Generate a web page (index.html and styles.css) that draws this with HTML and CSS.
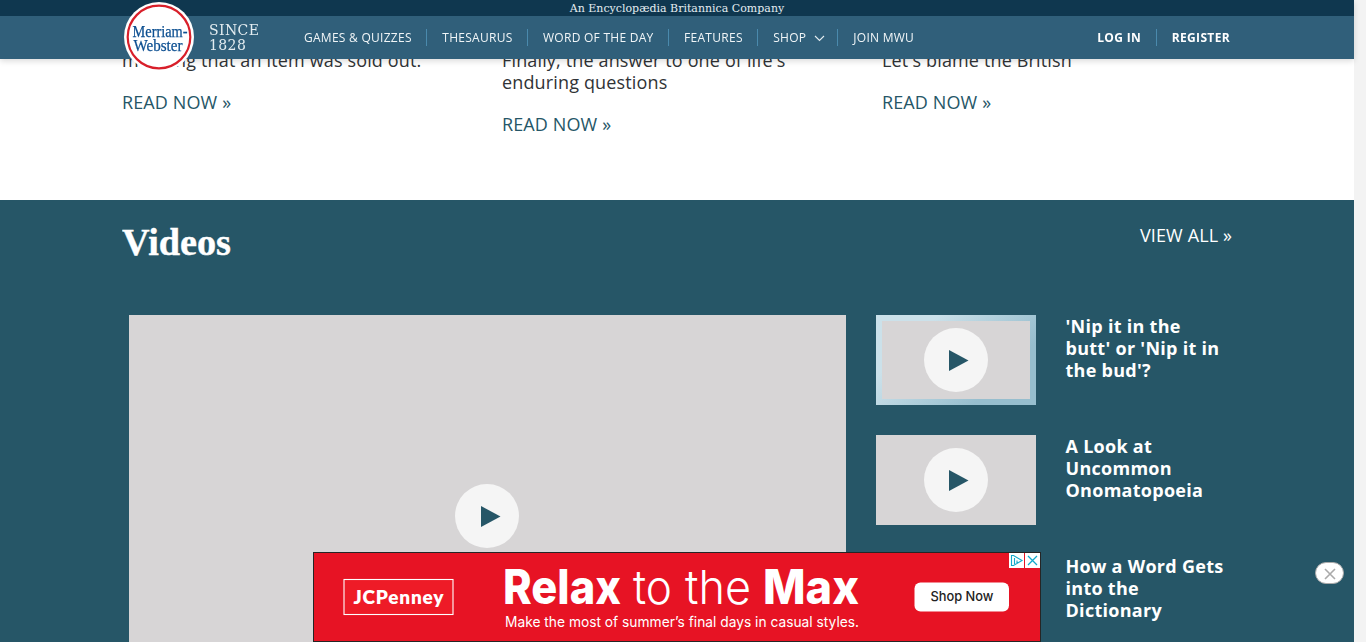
FILE: index.html
```html
<!DOCTYPE html>
<html lang="en">
<head>
<meta charset="utf-8">
<title>Merriam-Webster</title>
<link rel="stylesheet" href="styles.css">
</head>
<body>
<header class="header">
  <div class="tagline">An Encyclopædia Britannica Company</div>
  <div class="navbar">
    <svg class="logo" width="70" height="70" viewBox="0 0 70 70">
      <circle cx="35" cy="35" r="35" fill="#fff"/>
      <circle cx="35" cy="35" r="31.3" fill="#fff" stroke="#d81f2a" stroke-width="2.2"/>
      <text x="8.5" y="35" textLength="55" lengthAdjust="spacingAndGlyphs">Merriam-</text>
      <text x="9.5" y="49" textLength="49" lengthAdjust="spacingAndGlyphs">Webster</text>
    </svg>
    <div class="since">SINCE<br>1828</div>
    <nav class="nav">
      <a>GAMES &amp; QUIZZES</a><a>THESAURUS</a><a>WORD OF THE DAY</a><a>FEATURES</a>
      <a>SHOP<svg class="chevron" width="11" height="7" viewBox="0 0 11 7"><path d="M1 1l4.5 4.5L10 1" fill="none" stroke="#e4edf1" stroke-width="1.1"/></svg></a><a>JOIN MWU</a>
    </nav>
    <nav class="nav account"><a>LOG IN</a><a>REGISTER</a></nav>
  </div>
</header>
<div class="layout">
  <main class="page">
    <section class="articles">
      <article><p>meaning that an item was sold out.</p><a>READ NOW »</a></article>
      <article><p>Finally, the answer to one of life's enduring questions</p><a>READ NOW »</a></article>
      <article><p>Let's blame the British</p><a>READ NOW »</a></article>
    </section>
    <section class="videos">
      <div class="videos-head">
        <h2><svg width="114" height="46" viewBox="0 0 114 46"><text x="0" y="31" textLength="109" lengthAdjust="spacingAndGlyphs">Videos</text></svg></h2>
        <a>VIEW ALL »</a>
      </div>
      <div class="videos-body">
        <div class="player"><span class="play"><svg width="20" height="22" viewBox="0 0 20 22"><path d="M0 0L19.5 10.5 0 21z"/></svg></span></div>
        <ul class="list">
          <li><div class="thumb current"><span class="play"><svg width="20" height="22" viewBox="0 0 20 22"><path d="M0 0L19.5 10.5 0 21z"/></svg></span></div><h3>'Nip it in the butt' or 'Nip it in the bud'?</h3></li>
          <li><div class="thumb"><span class="play"><svg width="20" height="22" viewBox="0 0 20 22"><path d="M0 0L19.5 10.5 0 21z"/></svg></span></div><h3>A Look at Uncommon Onomatopoeia</h3></li>
          <li><div class="thumb"><span class="play"><svg width="20" height="22" viewBox="0 0 20 22"><path d="M0 0L19.5 10.5 0 21z"/></svg></span></div><h3>How a Word Gets into the Dictionary</h3></li>
        </ul>
      </div>
    </section>
  </main>
  <div class="scroll-track"></div>
</div>
<aside class="ad">
  <svg width="726" height="88" viewBox="0 0 726 88">
    <rect x="30" y="26.5" width="109" height="35" fill="#ee1b27" stroke="#fff" stroke-width="1.1"/>
    <text class="brand" x="39.5" y="50.5" textLength="90" lengthAdjust="spacing">JCPenney</text>
    <text class="strong" x="189" y="51" textLength="118" lengthAdjust="spacingAndGlyphs">Relax</text>
    <text class="thin" x="319" y="51" textLength="39" lengthAdjust="spacingAndGlyphs">to</text>
    <text class="thin" x="371" y="51" textLength="66" lengthAdjust="spacingAndGlyphs">the</text>
    <text class="strong" x="449" y="51" textLength="96" lengthAdjust="spacingAndGlyphs">Max</text>
    <text class="sub" x="191" y="74" textLength="354" lengthAdjust="spacingAndGlyphs">Make the most of summer’s final days in casual styles.</text>
    <rect x="600.5" y="29.5" width="94.5" height="29" rx="6" fill="#fff"/>
    <text class="cta" x="616.5" y="48" textLength="63" lengthAdjust="spacingAndGlyphs">Shop Now</text>
    <path d="M695 0h15v15h-15zM711 0h15v15h-15z" fill="#fff"/>
    <path d="M697.5 2.5v10l2 0 8.5-5-8.5-5zM700.5 5v6M703 7.5v3" fill="none" stroke="#12a9cb" stroke-width="1.1"/>
    <path d="M714 3l9 9M723 3l-9 9" fill="none" stroke="#12a9cb" stroke-width="1.3"/>
  </svg>
</aside>
<button class="close"><svg width="12" height="12" viewBox="0 0 12 12"><path d="M1 1l10 10M11 1L1 11" fill="none" stroke="#aaa" stroke-width="1.6"/></svg></button>
</body>
</html>
```
FILE: styles.css
```css
* { box-sizing: border-box; }
body { margin: 0; height: 642px; overflow: hidden; background: #fff; color: #303336; font: 18px/22px "Open Sans", sans-serif; letter-spacing: .15px; }
h2, h3, p, ul { margin: 0; padding: 0; }
.header { position: fixed; top: 0; left: 0; width: 1354px; height: 59px; z-index: 5; background: #305f7a; box-shadow: 0 2px 6px rgba(0,0,0,.15); }
.tagline { height: 16px; padding-top: 1px; background: #0f374f; color: #e4edf1; font: 11px/16px "DejaVu Serif", serif; letter-spacing: 0; text-align: center; }
.navbar { display: flex; align-items: center; height: 43px; padding: 0 124px; }
.logo { flex: none; margin-bottom: 2px; }
.logo text { font: 16px "Liberation Serif", serif; fill: #0c4f91; stroke: #0c4f91; stroke-width: .25px; letter-spacing: 0; }
.since { width: 80px; margin-left: 15px; color: #e4edf1; font: 14px/15px "DejaVu Serif", serif; letter-spacing: .4px; }
.nav { display: flex; color: #f0f5f7; font-size: 12px; line-height: 17px; letter-spacing: .27px; }
.nav a { display: flex; align-items: center; height: 17px; padding: 0 14.5px 0 15px; white-space: nowrap; }
.nav a + a { border-left: 1px solid #4a8aad; }
.chevron { margin: 1px -2.5px 0 8px; }
.account { margin-left: auto; margin-right: -14.5px; font-weight: 700; letter-spacing: .35px; color: #fff; }
.layout { display: flex; height: 642px; }
.page { width: 1354px; flex: none; }
.scroll-track { flex: 1; background: #f3f3f3; }
.articles { display: grid; grid-template-columns: repeat(3, 350px); column-gap: 30px; height: 200px; padding: 49px 0 0 122px; align-items: start; }
.articles p { margin-bottom: 20px; width: 320px; }
.articles a { display: block; color: #265667; letter-spacing: .12px; }
.videos { height: 442px; padding: 24px 122px 0; background: #265667; color: #fff; overflow: hidden; }
.videos-head { display: flex; justify-content: space-between; height: 91px; }
.videos-head h2 { line-height: 0; }
.videos-head text { font: bold 37px "Liberation Serif", serif; fill: #fff; stroke: #fff; stroke-width: .4px; letter-spacing: 0; }
.videos-head a { letter-spacing: .12px; }
.videos-body { display: flex; padding-left: 7px; gap: 30px; }
.player { display: flex; align-items: center; justify-content: center; width: 717px; height: 402px; padding-right: 1px; background: #d7d5d6; flex: none; }
.play { display: flex; align-items: center; justify-content: center; width: 64px; height: 64px; padding: 0 0 0 5px; border-radius: 50%; background: #f5f5f5; }
.player .play { padding: 2px 0 0 8px; }
.play path { fill: #265667; }
.list { display: flex; flex-direction: column; gap: 30px; list-style: none; }
.list li { display: flex; gap: 29.5px; height: 90px; }
.thumb { display: flex; align-items: center; justify-content: center; width: 160px; height: 90px; flex: none; background: #d7d5d6; }
.thumb .play { padding-top: 2px; }
.current { background: linear-gradient(#d7d5d6, #d7d5d6) content-box, linear-gradient(135deg, #cbe1ea 25%, #97bece 75%); padding: 6px; }
.list h3 { width: 160px; font-size: 18px; line-height: 22px; letter-spacing: .28px; }
.ad { position: fixed; left: 313px; top: 552px; width: 728px; height: 90px; z-index: 4; background: #e71324; border: 1px solid #252525; line-height: 0; }
.ad text { letter-spacing: 0; fill: #fff; font-family: Inter, sans-serif; }
.ad .brand { font: 800 19px Lato, sans-serif; }
.ad .strong { font-size: 48px; font-weight: 800; }
.ad .thin { font-size: 47px; font-weight: 300; }
.ad .sub { font-size: 14.5px; }
.ad .cta { font-size: 13.5px; font-weight: 500; fill: #222; }
.close { position: fixed; left: 1315px; top: 562px; width: 29px; height: 22px; padding: 1px 0 0; display: flex; align-items: center; justify-content: center; border: 1px solid #aaa; border-radius: 11px; background: #fff; }
```
